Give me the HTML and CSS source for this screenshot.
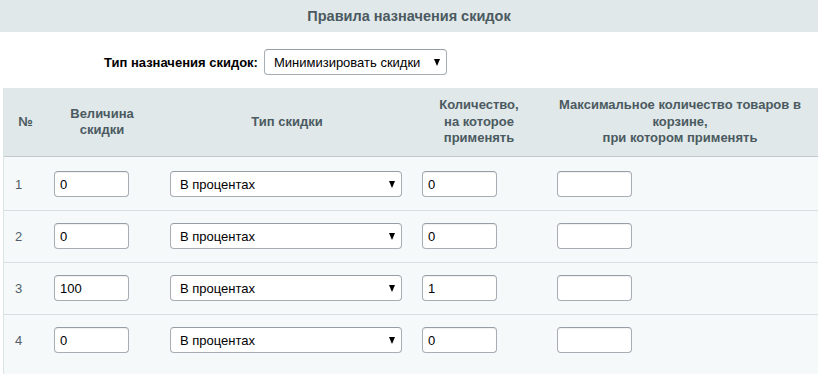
FILE: index.html
```html
<!DOCTYPE html>
<html lang="ru">
<head>
    <meta charset="UTF-8">
    <title>Правила назначения скидок</title>
    <link rel="stylesheet" href="styles.css">
</head>
<body>
    <!-- заголовок блока -->
    <div class="section-title">Правила назначения скидок</div>

    <!-- тип назначения -->
    <div class="mode-row">
        <label class="mode-label" for="mode">Тип назначения скидок:</label>
        <span class="select-wrap">
            <select id="mode" class="field-select mode-select">
                <option>Минимизировать скидки</option>
            </select>
        </span>
    </div>

    <!-- таблица правил -->
    <table class="rules">
        <colgroup>
            <col class="c-num">
            <col class="c-size">
            <col class="c-type">
            <col class="c-qty">
            <col class="c-max">
        </colgroup>
        <thead>
            <tr>
                <th>№</th>
                <th>Величина<br>скидки</th>
                <th>Тип скидки</th>
                <th>Количество,<br>на которое<br>применять</th>
                <th>Максимальное количество товаров в корзине,<br>при котором применять</th>
            </tr>
        </thead>
        <tbody>
            <tr>
                <td class="cell-num">1</td>
                <td class="cell-size"><input class="field-input" type="text" value="0"></td>
                <td class="cell-type"><span class="select-wrap"><select class="field-select type-select"><option>В процентах</option></select></span></td>
                <td class="cell-qty"><input class="field-input" type="text" value="0"></td>
                <td class="cell-max"><input class="field-input" type="text" value=""></td>
            </tr>
            <tr>
                <td class="cell-num">2</td>
                <td class="cell-size"><input class="field-input" type="text" value="0"></td>
                <td class="cell-type"><span class="select-wrap"><select class="field-select type-select"><option>В процентах</option></select></span></td>
                <td class="cell-qty"><input class="field-input" type="text" value="0"></td>
                <td class="cell-max"><input class="field-input" type="text" value=""></td>
            </tr>
            <tr>
                <td class="cell-num">3</td>
                <td class="cell-size"><input class="field-input" type="text" value="100"></td>
                <td class="cell-type"><span class="select-wrap"><select class="field-select type-select"><option>В процентах</option></select></span></td>
                <td class="cell-qty"><input class="field-input" type="text" value="1"></td>
                <td class="cell-max"><input class="field-input" type="text" value=""></td>
            </tr>
            <tr>
                <td class="cell-num">4</td>
                <td class="cell-size"><input class="field-input" type="text" value="0"></td>
                <td class="cell-type"><span class="select-wrap"><select class="field-select type-select"><option>В процентах</option></select></span></td>
                <td class="cell-qty"><input class="field-input" type="text" value="0"></td>
                <td class="cell-max"><input class="field-input" type="text" value=""></td>
            </tr>
        </tbody>
    </table>
</body>
</html>
```

FILE: styles.css
```css
/* общие настройки */
* {
    margin: 0;
    padding: 0;
    box-sizing: border-box;
}

body {
    font-family: 'Liberation Sans', Arial, sans-serif;
    font-size: 13px;
    color: #000;
    background: #fff;
}

/* заголовок */
.section-title {
    height: 32px;
    line-height: 32px;
    background: #e0e8ea;
    color: #4b5a60;
    font-size: 14.5px;
    font-weight: bold;
    text-align: center;
}

/* тип назначения */
.mode-row {
    display: flex;
    align-items: center;
    padding: 17px 0 13px 104px;
    gap: 6px;
}

.mode-label {
    font-weight: bold;
    color: #000;
}

/* поля */
.select-wrap {
    position: relative;
    display: inline-block;
}

.select-wrap::after {
    content: '';
    position: absolute;
    right: 7px;
    top: 10px;
    border-left: 3.5px solid transparent;
    border-right: 3.5px solid transparent;
    border-top: 7px solid #000;
    pointer-events: none;
}

.field-select {
    -webkit-appearance: none;
    appearance: none;
    height: 26px;
    border: 1px solid #a6adb3;
    border-top-color: #969ea5;
    border-radius: 4px;
    background: #fff;
    font-family: inherit;
    font-size: 13px;
    color: #000;
    padding: 0 0 0 9px;
    display: block;
}

.mode-select {
    width: 183px;
}

.type-select {
    width: 232px;
}

.field-input {
    width: 75px;
    height: 26px;
    border: 1px solid #a6adb3;
    border-top-color: #969ea5;
    border-radius: 4px;
    background: #fff;
    font-family: inherit;
    font-size: 13px;
    color: #000;
    padding: 0 5px;
    display: block;
    box-shadow: inset 0 1px 1px rgba(0, 0, 0, 0.06);
}

/* таблица */
.rules {
    width: 815px;
    margin-left: 3px;
    border-collapse: separate;
    border-spacing: 0;
    table-layout: fixed;
    border-left: 1px solid #dce3e4;
    border-right: 1px solid #dce3e4;
}

.c-num { width: 43px; }
.c-size { width: 110px; }
.c-type { width: 260px; }
.c-qty { width: 124px; }
.c-max { width: 278px; }

.rules th {
    height: 69px;
    background: #e0e8ea;
    color: #4b5a60;
    font-weight: bold;
    line-height: 16.5px;
    text-align: center;
    vertical-align: middle;
    border-bottom: 1px solid #c3c9cb;
    padding: 0 4px;
}

.rules td {
    background: #f5f9f9;
    border-bottom: 1px solid #d7dfe0;
    padding: 12px 0 13px;
    vertical-align: middle;
}

.rules tbody tr:first-child td {
    padding-top: 14px;
}

.rules tbody tr:last-child td {
    border-bottom: none;
    padding-bottom: 24px;
}

.rules td.cell-num {
    padding-left: 11px;
    color: #535d6a;
}

.rules td.cell-size { padding-left: 7px; }
.rules td.cell-type { padding-left: 13px; }
.rules td.cell-qty { padding-left: 5px; }
.rules td.cell-max { padding-left: 16px; }
```
